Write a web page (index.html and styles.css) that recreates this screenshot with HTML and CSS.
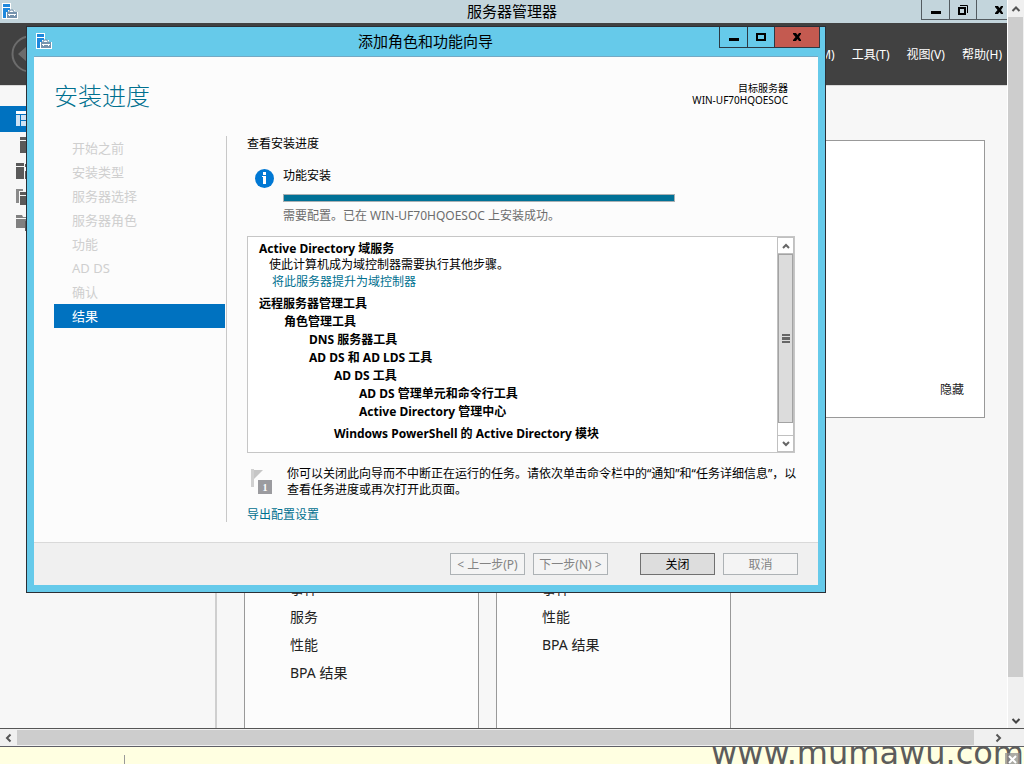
FILE: index.html
```html
<!DOCTYPE html>
<html lang="zh-CN">
<head>
<meta charset="utf-8">
<title>服务器管理器</title>
<link rel="stylesheet" href="styles.css">
</head>
<body>
<svg class="defs" width="0" height="0" aria-hidden="true">
  <symbol id="app-icon" viewBox="0 0 16 16">
    <path d="M0 0h9v7h4v2h3v7H0z" fill="#fff"/>
    <path d="M1 1h7v3H1z" fill="#1e88dc"/>
    <path d="M1 5h7v2H6v2H4v6H1z" fill="#1e88dc"/>
    <path d="M5 9h10v6H5z" fill="#7592ad"/>
    <path d="M7 9V8h1V7h3v1h1v1" fill="none" stroke="#7592ad"/>
    <path d="M6 11h8v1H6zM7 12h1v1H7zM12 12h1v1h-1z" fill="#fff"/>
  </symbol>
  <symbol id="close-icon" viewBox="0 0 10 8">
    <path d="M1 0h3l1.500 2L7 0h2v1L7 4l2 3v1H7L5.500 6 4 8H1V7l2.500-3L1 1z"/>
  </symbol>
  <symbol id="min-icon" viewBox="0 0 10 8"><path d="M0 5h10v3H0z"/></symbol>
</svg>

<div class="desktop">
  <main class="manager">
    <header class="titlebar">
      <svg class="app-icon" width="16" height="16"><use href="#app-icon"/></svg>
      <h1 class="window-title">服务器管理器</h1>
      <div class="controls">
        <button class="control" aria-label="最小化"><svg width="10" height="8"><use href="#min-icon"/></svg></button>
        <button class="control" aria-label="还原"><svg width="10" height="10" viewBox="0 0 10 10"><path d="M1 3h6v6H1z" fill="none" stroke="#000" stroke-width="2"/><path d="M2 .5h7.500v7.500" fill="none" stroke="#000"/></svg></button>
        <button class="control control-last" aria-label="关闭"><svg width="10" height="8"><use href="#close-icon"/></svg></button>
      </div>
    </header>
    <nav class="menubar">
      <button class="back" aria-label="后退"><svg width="38" height="38" viewBox="0 0 38 38"><circle cx="19" cy="19" r="17.500" fill="none" stroke="#6c6c6c" stroke-width="2"/><path d="M7 19l9-8v5h13v6H16v5z" fill="#6c6c6c"/></svg></button>
      <div class="menu">
        <a href="#">管理(M)</a><a href="#">工具(T)</a><a href="#">视图(V)</a><a href="#">帮助(H)</a>
      </div>
    </nav>
    <div class="workspace">
      <aside class="sidebar">
        <a class="side-item side-active" href="#" aria-label="仪表板"><svg width="16" height="16"><path d="M0 0h16v3H0z" fill="#fff"/><path d="M0 4h4v11H0zM5 4h11v5H5zM5 10h11v5H5z" fill="#cfe3f4"/></svg></a>
        <a class="side-item" href="#" aria-label="本地服务器"><svg width="16" height="16"><path d="M4 0h8v3H4zM4 4h8v12H4z" fill="#5a5a5a"/></svg></a>
        <a class="side-item" href="#" aria-label="所有服务器"><svg width="16" height="16"><path d="M0 0h8v3H0zM0 4h8v12H0zM9 1h6v3H9zM9 8h6v8H9z" fill="#5a5a5a"/></svg></a>
        <a class="side-item" href="#" aria-label="AD DS"><svg width="16" height="16"><path d="M0 0h7v2H3v12H0z" fill="#8a8a8a"/><path d="M4 3h9v3H4zM4 7h9v9H4z" fill="#5a5a5a"/></svg></a>
        <a class="side-item" href="#" aria-label="文件和存储服务"><svg width="16" height="16"><path d="M0 0h6l1 2h3v1H0zM0 4h10v9H0z" fill="#808080"/><path d="M9 6h6v10H9z" fill="#5a5a5a"/></svg></a>
      </aside>
      <section class="content">
        <div class="welcome"><button class="hide">隐藏</button></div>
        <div class="cards">
          <ul class="card"><li>事件</li><li>服务</li><li>性能</li><li>BPA 结果</li></ul>
          <ul class="card"><li>事件</li><li>性能</li><li>BPA 结果</li></ul>
        </div>
      </section>
    </div>
  </main>

  <div class="vscroll">
    <svg width="16" height="17" viewBox="0 0 16 17"><path d="M4.500 11L8 7.500 11.500 11" fill="none" stroke="#555" stroke-width="2"/></svg>
    <div class="vthumb"></div>
    <svg width="16" height="17" viewBox="0 0 16 17"><path d="M4.500 8L8 11.500 11.500 8" fill="none" stroke="#444" stroke-width="2"/></svg>
  </div>

  <div class="hscroll">
    <svg width="17" height="16" viewBox="0 0 17 16"><path d="M10.500 4.500L7 8l3.500 3.500" fill="none" stroke="#555" stroke-width="2"/></svg>
    <div class="hthumb"></div>
    <svg width="17" height="16" viewBox="0 0 17 16"><path d="M6.500 4.500L10 8l-3.500 3.500" fill="none" stroke="#555" stroke-width="2"/></svg>
  </div>

  <footer class="strip">
    <span class="divider"></span>
    <span class="watermark">www.mumawu.com</span>
    <svg class="strip-close" width="15" height="11" viewBox="0 0 15 11"><path d="M0 0h15v11H0z" fill="#8f8f8f" opacity=".75"/><path d="M4 3l7 7M11 3l-7 7" stroke="#fff" stroke-width="2"/></svg>
  </footer>

  <section class="dialog" role="dialog" aria-labelledby="dialog-title">
    <header class="dialog-titlebar">
      <svg class="dialog-icon" width="16" height="16"><use href="#app-icon"/></svg>
      <h2 class="window-title" id="dialog-title">添加角色和功能向导</h2>
      <div class="dialog-controls">
        <button class="control" aria-label="最小化"><svg width="10" height="8"><use href="#min-icon"/></svg></button>
        <button class="control" aria-label="最大化"><svg width="10" height="8" viewBox="0 0 10 8"><path d="M1 1h8v6H1z" fill="none" stroke="#000" stroke-width="2"/></svg></button>
        <button class="control control-close" aria-label="关闭"><svg width="10" height="8"><use href="#close-icon"/></svg></button>
      </div>
    </header>
    <div class="dialog-page">
      <div class="heading">
        <h3 class="page-title">安装进度</h3>
        <p class="target">目标服务器<br>WIN-UF70HQOESOC</p>
      </div>
      <div class="columns">
        <ol class="steps">
          <li>开始之前</li><li>安装类型</li><li>服务器选择</li><li>服务器角色</li>
          <li>功能</li><li>AD DS</li><li>确认</li><li class="current">结果</li>
        </ol>
        <div class="progress-page">
          <p class="subtitle">查看安装进度</p>
          <div class="status">
            <svg class="info" width="19" height="19" viewBox="0 0 19 19"><circle cx="9.500" cy="9.500" r="9.500" fill="#0078d4"/><path d="M8 3h3v3H8zM7 7h4v8H8V8H7z" fill="#fff"/></svg>
            <div class="status-body">
              <p>功能安装</p>
              <div class="bar" role="progressbar" aria-valuenow="100"></div>
              <p class="status-note">需要配置。已在 WIN-UF70HQOESOC 上安装成功。</p>
            </div>
          </div>
          <div class="results">
            <div class="tree">
              <p class="summary"><b>Active Directory 域服务</b></p>
              <p class="summary level-note">使此计算机成为域控制器需要执行其他步骤。</p>
              <p class="level-link"><a href="#">将此服务器提升为域控制器</a></p>
              <p class="feature spaced">远程服务器管理工具</p>
              <p class="feature level-1">角色管理工具</p>
              <p class="feature level-2">DNS 服务器工具</p>
              <p class="feature level-2">AD DS 和 AD LDS 工具</p>
              <p class="feature level-3">AD DS 工具</p>
              <p class="feature level-4">AD DS 管理单元和命令行工具</p>
              <p class="feature level-4">Active Directory 管理中心</p>
              <p class="feature level-3 spaced">Windows PowerShell 的 Active Directory 模块</p>
            </div>
            <div class="tree-scroll">
              <button class="tree-arrow" aria-label="向上"><svg width="8" height="6"><path d="M1 5l3-3 3 3" fill="none" stroke="#666" stroke-width="2"/></svg></button>
              <div class="tree-thumb"><svg width="8" height="9"><path d="M0 0h8v2H0zM0 3h8v3H0zM0 7h8v2H0z" fill="#666"/></svg></div>
              <div class="tree-track"></div>
              <button class="tree-arrow" aria-label="向下"><svg width="8" height="6"><path d="M1 1l3 3 3-3" fill="none" stroke="#666" stroke-width="2"/></svg></button>
            </div>
          </div>
          <div class="notice">
            <svg class="flag" width="23" height="26" viewBox="0 0 23 26"><path d="M1 0h3v18H1z" fill="#d0d0d0"/><path d="M4 1h9L4 10z" fill="#c6c6c6"/><path d="M8 11h14v14H8z" fill="#9b9b9f"/><text x="15" y="22" text-anchor="middle" class="badge">1</text></svg>
            <p>你可以关闭此向导而不中断正在运行的任务。请依次单击命令栏中的“通知”和“任务详细信息”，以<br>查看任务进度或再次打开此页面。</p>
          </div>
          <a class="export" href="#">导出配置设置</a>
        </div>
      </div>
      <div class="actions">
        <button class="action" disabled>&lt; 上一步(P)</button>
        <button class="action" disabled>下一步(N) &gt;</button>
        <button class="action action-primary">关闭</button>
        <button class="action" disabled>取消</button>
      </div>
    </div>
  </section>
</div>
</body>
</html>
```

FILE: styles.css
```css
* { box-sizing: border-box; }
body, h1, h2, h3, p, ul, ol { margin: 0; padding: 0; }
ul, ol { list-style: none; }
svg { display: block; flex: none; }
button { font: inherit; padding: 0; margin: 0; border: 0; background: none; color: inherit; }
a { color: inherit; text-decoration: none; }

body {
  font-family: "Noto Sans", "Noto Sans CJK SC", sans-serif;
  font-size: 12px;
  line-height: 16px;
  color: #000;
}
.defs { position: absolute; }

.desktop {
  position: relative;
  display: grid;
  grid-template-columns: minmax(0, 1fr) 17px;
  grid-template-rows: minmax(0, 1fr) 19px 17px;
  height: 100vh;
  overflow: hidden;
  background: #f0f0f0;
}

/* Server manager window */
.manager {
  display: flex;
  flex-direction: column;
  min-height: 0;
  overflow: hidden;
  background: #f7f7f7;
}
.titlebar {
  flex: none;
  display: grid;
  grid-template-columns: 103px 1fr 86px;
  height: 23px;
  background: #c3d5dc;
}
.app-icon { margin: 3px 2px; }
.window-title {
  font-size: 15px;
  font-weight: 400;
  line-height: 23px;
  text-align: center;
  white-space: nowrap;
}
.controls { display: flex; height: 20px; }
.control {
  display: flex;
  align-items: center;
  justify-content: center;
  width: 27px;
  border: 1px solid #535b60;
  border-top: 0;
  border-right: 0;
}
.controls .control:first-child { width: 28px; }
.control-last { flex: 1; padding-left: 13px; }
.menubar {
  flex: none;
  display: flex;
  align-items: center;
  justify-content: space-between;
  height: 62px;
  padding: 0 5px 0 11px;
  background: #414141;
  color: #fff;
}
.menu { display: flex; gap: 17px; padding-top: 2px; }
.workspace {
  flex: 1;
  display: flex;
  min-height: 0;
  border-top: 1px solid #d9d9d9;
}
.sidebar {
  flex: none;
  width: 217px;
  padding-top: 20px;
  border-right: 2px solid #cfcfcf;
}
.side-item {
  display: flex;
  align-items: center;
  height: 26px;
  padding-left: 16px;
}
.side-active { background: #0072c0; }
.content {
  flex: 1;
  display: flex;
  flex-direction: column;
  gap: 42px;
  padding: 54px 22px 0 27px;
}
.welcome {
  flex: none;
  display: flex;
  align-items: flex-end;
  justify-content: flex-end;
  height: 278px;
  padding: 0 20px 19px;
  border: 1px solid #999;
  background: #fff;
}
.hide { color: #222; }
.cards { flex: 1; display: flex; gap: 17px; min-height: 0; }
.card {
  width: 235px;
  padding: 114px 0 0 45px;
  border: 1px solid #999;
  border-bottom: 0;
  background: #fcfcfc;
  font-size: 14px;
  line-height: 28px;
  color: #222;
}

/* Outer scrollbars */
.vscroll {
  display: flex;
  flex-direction: column;
  padding: 0 1px 0 0;
  border-left: 1px solid #fff;
}
.vthumb { flex: 1; margin-bottom: 34px; background: #cdcdcd; }
.hscroll {
  grid-column: 1 / -1;
  display: flex;
  padding: 1px 17px 1px 0;
  border-top: 1px solid #555;
  border-bottom: 1px solid #5f5f66;
}
.hthumb { flex: 1; margin-right: 16px; background: #cdcdcd; }

.strip {
  grid-column: 1 / -1;
  position: relative;
  display: flex;
  justify-content: space-between;
  align-items: flex-end;
  background: #ffffe1;
}
.divider { width: 1px; height: 9px; margin-left: 124px; background: #999; }
.watermark {
  height: 24px;
  font-family: "DejaVu Sans", sans-serif;
  font-size: 32px;
  line-height: 26px;
  color: #5c5c5c;
}
.strip-close { position: absolute; right: 4px; bottom: 0; }

/* Wizard dialog */
.dialog {
  position: absolute;
  left: 26px;
  top: 26px;
  width: 800px;
  border: 1px solid #2b2f36;
  background: #66caea;
}
.dialog-titlebar {
  display: grid;
  grid-template-columns: 105px 1fr 101px;
  height: 29px;
  margin-right: 5px;
}
.dialog-titlebar .window-title { line-height: 29px; }
.dialog-icon { margin: 6px 9px; }
.dialog-controls { display: flex; height: 21px; }
.dialog-controls .control { width: 27px; border-color: #2b3a45; }
.dialog-controls .control:first-child { width: 28px; }
.dialog-controls .control-close { flex: 1; border-right: 1px solid #2b3a45; background: #c45a50; }
.dialog-page {
  margin: 0 7px 7px;
  border-top: 1px solid #74a9c4;
  background: #fcfcfc;
}
.heading {
  display: flex;
  justify-content: space-between;
  height: 79px;
  padding: 23px 30px 0 20px;
}
.page-title { font-size: 24px; font-weight: 300; line-height: 32px; color: #00708f; }
.target { font-size: 10px; line-height: 12px; padding-top: 2px; text-align: right; }
.columns { display: flex; gap: 1px; height: 386px; padding: 0 20px; }
.steps {
  width: 171px;
  font-size: 13px;
  line-height: 24px;
  color: #cfcfcf;
}
.steps li { padding-left: 18px; }
.steps .current { background: #0072c0; color: #fff; }
.progress-page { flex: 1; padding-left: 20px; border-left: 1px solid #c8c8c8; }
.status { display: flex; gap: 9px; padding: 16px 0 0 8px; }
.status-body { flex: 1; }
.bar {
  width: 392px;
  height: 8px;
  margin: 10px 0 6px;
  border: 1px solid #a9b0b3;
  background: #007196;
}
.info { margin-top: 1px; }
.status-note { color: #6d6d6d; }
.results {
  display: flex;
  width: 548px;
  height: 217px;
  margin-top: 12px;
  border: 1px solid #c6c6c6;
  background: #fff;
}
.tree { flex: 1; padding: 4px 11px 0; line-height: 18px; }
.summary { line-height: 16px; }
.level-note { padding-left: 10px; }
.level-link { padding-left: 13px; }
.level-link a, .export { color: #00708f; }
.feature { font-weight: 700; }
.spaced { margin-top: 4px; }
.level-1 { padding-left: 25px; }
.level-2 { padding-left: 50px; }
.level-3 { padding-left: 75px; }
.level-4 { padding-left: 100px; }
.tree-scroll {
  display: flex;
  flex-direction: column;
  width: 17px;
  border: solid #c0c0c0;
  border-width: 0 1px;
}
.tree-arrow, .tree-thumb {
  display: flex;
  align-items: center;
  justify-content: center;
}
.tree-arrow { height: 17px; border: 1px solid #c0c0c0; border-width: 1px 0; }
.tree-thumb { flex: 1; border: 1px solid #a3a3a3; background: #dcdcdc; }
.tree-track { height: 12px; }
.notice { display: flex; gap: 14px; padding: 13px 0 0 3px; white-space: nowrap; }
.flag { margin-top: 3px; }
.badge { font: 700 10px "Liberation Serif", serif; fill: #fff; }
.export { display: block; margin-top: 9px; }
.actions {
  display: flex;
  justify-content: flex-end;
  gap: 8px;
  margin-top: 20px;
  padding: 10px 20px;
  border-top: 1px solid #d9d9d9;
  background: #f0f0f0;
}
.action {
  width: 75px;
  height: 22px;
  padding-top: 1px;
  border: 1px solid #adb2b5;
  background: #f4f4f4;
  color: #838383;
  white-space: nowrap;
}
.action-primary { margin-left: 24px; border-color: #707070; background: #dddddd; color: #000; }
```
